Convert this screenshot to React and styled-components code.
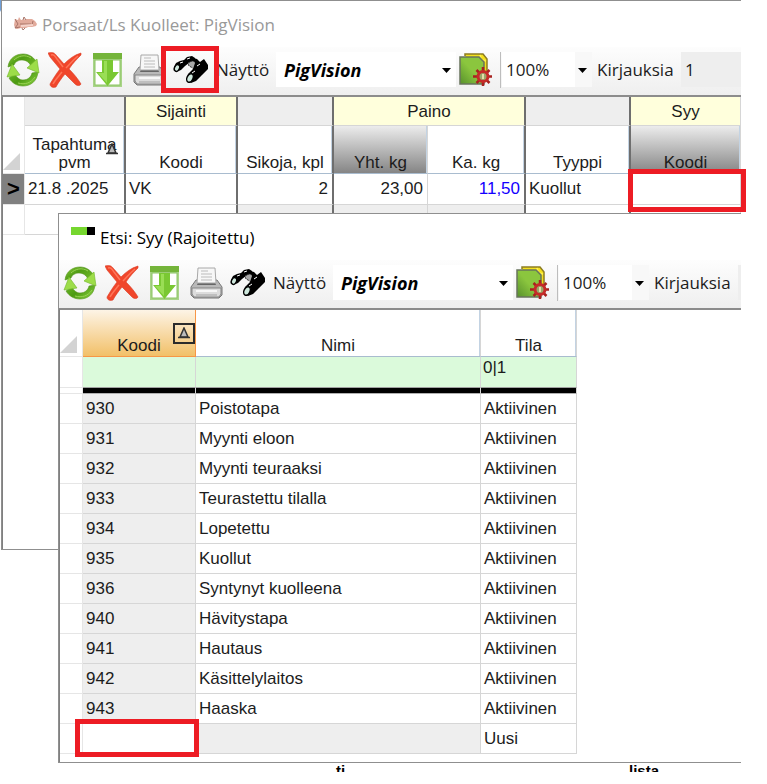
import React from "react";
import styled, { createGlobalStyle, css } from "styled-components";

const uiFont = `"Open Sans", "Noto Sans", sans-serif`;
const gridFont = `"Liberation Sans", Arial, sans-serif`;

const reasons = [
  { code: "930", name: "Poistotapa", state: "Aktiivinen" },
  { code: "931", name: "Myynti eloon", state: "Aktiivinen" },
  { code: "932", name: "Myynti teuraaksi", state: "Aktiivinen" },
  { code: "933", name: "Teurastettu tilalla", state: "Aktiivinen" },
  { code: "934", name: "Lopetettu", state: "Aktiivinen" },
  { code: "935", name: "Kuollut", state: "Aktiivinen" },
  { code: "936", name: "Syntynyt kuolleena", state: "Aktiivinen" },
  { code: "940", name: "Hävitystapa", state: "Aktiivinen" },
  { code: "941", name: "Hautaus", state: "Aktiivinen" },
  { code: "942", name: "Käsittelylaitos", state: "Aktiivinen" },
  { code: "943", name: "Haaska", state: "Aktiivinen" },
];

// icons

const PigIcon = () => (
  <svg width="24" height="16" viewBox="0 0 24 16">
    <path
      d="M1 3l3 1 1-3 2 3 6-1 5 0 3 2 2 3-1 2-4 1-4 0-2 1-5 0-4 1-2-1-1-3z"
      fill="#e2ab9c"
    />
    <path d="M1 3l3 5-3 4 5-1M9 4l1-3 2 3M8 12l1 2 2-2M6 8h11M19 5l-1 4" fill="none" stroke="#a87468" />
    <path d="M7 10l12-1" stroke="#f5d3ca" strokeWidth="2" />
  </svg>
);

const RefreshIcon = () => (
  <svg width="34" height="34" viewBox="0 0 34 34">
    <defs>
      <linearGradient id="refreshTop" x1="0" y1="0" x2="1" y2="0.6">
        <stop offset="0" stopColor="#8fd03c" />
        <stop offset="0.5" stopColor="#4f9c14" />
        <stop offset="1" stopColor="#69b322" />
      </linearGradient>
      <linearGradient id="refreshBottom" x1="0" y1="0" x2="1" y2="0.6">
        <stop offset="0" stopColor="#6cb828" />
        <stop offset="0.5" stopColor="#4c9a12" />
        <stop offset="1" stopColor="#7cc636" />
      </linearGradient>
    </defs>
    <path
      d="M2 14C3 5 10 1 17 1c6 0 10 3 13 7l-5 5C23 9 20 7 16 7c-4 0-7 2-8 5z"
      fill="url(#refreshTop)"
      stroke="#55931f"
      strokeWidth="0.6"
    />
    <path
      d="M32 19C31 29 24 33 17 33 11 33 6 30 3 25l6-4c2 4 5 6 8 6 5 0 8-3 9-7z"
      fill="url(#refreshBottom)"
      stroke="#55931f"
      strokeWidth="0.6"
    />
    <path d="M21 15l10-9 2 14z" fill="#9ddd49" stroke="#70b528" strokeWidth="0.6" />
    <path d="M1 24L6 11l8 11z" fill="#9ddd49" stroke="#70b528" strokeWidth="0.6" />
    <path d="M8 7c4-4 11-6 17-2M29 24c-4 6-10 8-17 6" fill="none" stroke="#9ad255" strokeWidth="1" />
  </svg>
);

const DeleteIcon = () => (
  <svg width="34" height="36" viewBox="0 0 34 36">
    <path
      d="M0 1c3-1 6-1 8 2l8 9C21 7 26 3 33 1l0 2c-4 4-8 8-12 14 5 5 9 10 12 15-1 2-4 2-6 0L17 22c-4 5-7 9-9 13-3 1-6 0-6-3 3-5 6-10 10-15L2 5z"
      fill="#f0462b"
      stroke="#dc3a22"
      strokeWidth="0.6"
    />
    <path d="M3 3c3-1 4 1 6 4l6 8M30 4c-5 4-8 8-12 12M14 20c-4 5-7 8-9 12" fill="none" stroke="#ff7558" strokeWidth="1.500" />
  </svg>
);

const DownloadIcon = () => (
  <svg width="34" height="36" viewBox="0 0 34 36">
    <rect x="3" y="1" width="29" height="34" fill="#a9d489" />
    <rect x="5" y="8" width="25" height="25" fill="#fff" stroke="#8cc463" />
    <rect x="3" y="1" width="29" height="6" fill="#74b43a" />
    <path d="M12 8h11v12h6L17.500 34 6 20h6z" fill="#7ac832" />
    <path d="M14 9h3v22L8 21h6z" fill="#9ade55" />
  </svg>
);

const PrinterIcon = () => (
  <svg width="34" height="34" viewBox="0 0 34 34">
    <path d="M7 14l-5 7v8l3 3h25l3-3v-8l-5-7z" fill="#b9b9b9" stroke="#777" />
    <path d="M3 22h29v6l-2 3H5l-2-3z" fill="#dcdcdc" stroke="#858585" />
    <path d="M8 19l2-5h15l2 5z" fill="#666" />
    <path d="M9 2h17l1 15H8z" fill="#f7f7f7" stroke="#a8a8a8" />
    <path d="M12 5h7M12 8h11M12 11h11M12 14h11" stroke="#bbb" />
    <path d="M7 24h21v2H7z" fill="#f7f7f7" />
    <path d="M7 29h21" stroke="#a2a2a2" />
  </svg>
);

const BinocularsIcon = () => (
  <svg width="36" height="30" viewBox="0 0 36 30">
    <path d="M1 12l2-4 4-2 4-1 3-3 5-1 3 2 1 4-3 2-4-1-4 3-4 4-5 2-2-2z" fill="#000" />
    <path d="M15 8l4-2 4 1 3 3-1 4-3 3-2-4-4-2z" fill="#a9a9a9" stroke="#333" strokeDasharray="2 1" />
    <path d="M20 3l4 1 3 3 4-3 4 6 0 4-6 6-6 6-5 2-4-3 1-6 5-5 2-6z" fill="#000" />
    <ellipse cx="4" cy="13" rx="2.500" ry="3.500" transform="rotate(25 4 13)" fill="#cfe9de" stroke="#000" strokeWidth="1.500" />
    <ellipse cx="17" cy="23" rx="3" ry="4.500" transform="rotate(25 17 23)" fill="#cfe9de" stroke="#000" strokeWidth="1.500" />
    <path d="M7 8l3-1M14 4l3-1M22 16l-3 2M24 11l3-2" stroke="#fff" />
  </svg>
);

const SettingsIcon = () => (
  <svg width="34" height="34" viewBox="0 0 34 34">
    <defs>
      <linearGradient id="pageGreen" x1="0" y1="1" x2="1" y2="0">
        <stop offset="0" stopColor="#57902c" />
        <stop offset="0.5" stopColor="#8bc63e" />
      </linearGradient>
    </defs>
    <path d="M7 3V1h18l4 5v22" fill="#f4e01c" stroke="#8c7c22" strokeWidth="1.500" />
    <path d="M22 2l1 5 5 1" fill="none" stroke="#fff04a" strokeWidth="2" />
    <path d="M2 4h19l5 5v22H2z" fill="url(#pageGreen)" stroke="#68745c" strokeWidth="1.500" />
    <path d="M25 14v19M15 23.500h19M18.500 17l13 13M31.500 17l-13 13" stroke="#a8221f" strokeWidth="2.500" />
    <circle cx="25" cy="23.500" r="5" fill="#9aa86a" stroke="#c62b28" strokeWidth="3" />
    <path d="M25 21v5" stroke="#e6dca8" strokeWidth="2" />
  </svg>
);

const SelectArrow = () => (
  <ArrowSlot>
    <svg width="9" height="5" viewBox="0 0 9 5">
      <path d="M0 0h9L4.500 5z" fill="#000" />
    </svg>
  </ArrowSlot>
);

const SortTriangle = () => (
  <svg width="12" height="12" viewBox="0 0 12 12">
    <path d="M6 1l4 9H2z" fill="#bbb" stroke="#333" strokeWidth="1.500" />
    <path d="M0 10.500h12" stroke="#333" strokeWidth="1.500" />
  </svg>
);

const CornerTriangle = () => (
  <svg width="17" height="17" viewBox="0 0 17 17">
    <path d="M17 0v17H0z" fill="#d3d3d3" />
  </svg>
);

const AppIcon = () => (
  <svg width="24" height="8" viewBox="0 0 24 8">
    <path d="M0 0h16v8H0z" fill="#76d72f" />
    <path d="M16 0h8v8h-8z" fill="#000" />
  </svg>
);

const Toolbar = ({ id, count, highlightSearch }) => (
  <ToolbarRow>
    <IconButton type="button" aria-label="Päivitä">
      <RefreshIcon />
    </IconButton>
    <IconButton type="button" aria-label="Poista">
      <DeleteIcon />
    </IconButton>
    <IconButton type="button" aria-label="Tallenna">
      <DownloadIcon />
    </IconButton>
    <IconButton type="button" aria-label="Tulosta">
      <PrinterIcon />
    </IconButton>
    <IconButton type="button" aria-label="Etsi">
      <BinocularsIcon />
      {highlightSearch && <Highlight $inset="-7px -11px -6px -13px" />}
    </IconButton>
    <ToolLabel htmlFor={`${id}-view`} $width={60}>
      Näyttö
    </ToolLabel>
    <SelectBox $width={180}>
      <ToolSelect id={`${id}-view`} $strong>
        <option>PigVision</option>
      </ToolSelect>
      <SelectArrow />
    </SelectBox>
    <IconButton type="button" aria-label="Asetukset">
      <SettingsIcon />
    </IconButton>
    <Divider />
    <SelectBox $width={90} $shaded>
      <ToolSelect id={`${id}-zoom`} aria-label="Zoom">
        <option>100%</option>
      </ToolSelect>
      <SelectArrow />
    </SelectBox>
    <ToolLabel htmlFor={`${id}-count`} $width={89} $pad={5}>
      Kirjauksia
    </ToolLabel>
    <CountBox id={`${id}-count`}>{count}</CountBox>
  </ToolbarRow>
);

const EventsTable = () => (
  <Table $fluid>
    <colgroup>
      <Col $width={22} />
      <Col $width={101} />
      <Col $width={112} />
      <Col $width={96} />
      <Col $width={94} />
      <Col $width={98} />
      <Col $width={105} />
      <col />
    </colgroup>
    <thead>
      <tr>
        <CornerCell rowSpan={2}>
          <CornerTriangle />
        </CornerCell>
        <GroupCell $dark />
        <GroupCell $dark $named>
          Sijainti
        </GroupCell>
        <GroupCell $dark />
        <GroupCell $dark $named colSpan={2}>
          Paino
        </GroupCell>
        <GroupCell $dark />
        <GroupCell $named>Syy</GroupCell>
      </tr>
      <tr>
        <HeadCell $dark $height={48}>
          Tapahtuma
          <br />
          pvm
          <SortMark>
            <SortTriangle />
          </SortMark>
        </HeadCell>
        <HeadCell $dark>Koodi</HeadCell>
        <HeadCell $dark>Sikoja, kpl</HeadCell>
        <HeadCell $tone="grey">Yht. kg</HeadCell>
        <HeadCell $dark>Ka. kg</HeadCell>
        <HeadCell $dark>Tyyppi</HeadCell>
        <HeadCell $tone="grey">Koodi</HeadCell>
      </tr>
    </thead>
    <tbody>
      <tr>
        <RowMark $current $height={31}>
          &gt;
        </RowMark>
        <Cell $dark>21.8 .2025</Cell>
        <Cell $dark>VK</Cell>
        <Cell $dark $right>
          2
        </Cell>
        <Cell $right>23,00</Cell>
        <Cell $dark $right $blue>
          11,50
        </Cell>
        <Cell $dark>Kuollut</Cell>
        <Cell>
          <CellInput aria-label="Syy, koodi" />
          <Highlight $inset="-5px -6px -8px -3px" />
        </Cell>
      </tr>
      <tr>
        <RowMark $height={30} />
        <Cell $dark />
        <Cell $dark />
        <Cell $dark $muted />
        <Cell $muted />
        <Cell $dark $muted />
        <Cell $dark />
        <Cell />
      </tr>
    </tbody>
  </Table>
);

const ReasonsTable = () => (
  <Table>
    <colgroup>
      <Col $width={23} />
      <Col $width={113} />
      <Col $width={285} />
      <Col $width={96} />
    </colgroup>
    <thead>
      <tr>
        <CornerCell>
          <CornerTriangle />
        </CornerCell>
        <HeadCell $tone="orange" $height={47}>
          Koodi
          <SortMark $boxed>
            <SortTriangle />
          </SortMark>
        </HeadCell>
        <HeadCell>Nimi</HeadCell>
        <HeadCell>Tila</HeadCell>
      </tr>
      <tr>
        <RowMark $height={31} />
        <FilterCell>
          <CellInput aria-label="Suodata koodi" />
        </FilterCell>
        <FilterCell>
          <CellInput aria-label="Suodata nimi" />
        </FilterCell>
        <FilterCell>
          <CellInput aria-label="Suodata tila" defaultValue="0|1" />
        </FilterCell>
      </tr>
      <tr>
        <RowMark $height={6} />
        <BarCell />
        <BarCell />
        <BarCell />
      </tr>
    </thead>
    <tbody>
      {reasons.map(({ code, name, state }) => (
        <tr key={code}>
          <RowMark $height={30} />
          <Cell $muted>{code}</Cell>
          <Cell>{name}</Cell>
          <Cell>{state}</Cell>
        </tr>
      ))}
      <tr>
        <RowMark $height={30} />
        <Cell>
          <CellInput aria-label="Uusi koodi" />
          <Highlight $inset="-5px -4px -4px -8px" />
        </Cell>
        <Cell $muted />
        <Cell>Uusi</Cell>
      </tr>
    </tbody>
  </Table>
);

const App = () => (
  <Page>
    <GlobalStyle />
    <Desktop>
      <Window>
        <TitleBar $inactive>
          <PigIcon />
          <span>Porsaat/Ls Kuolleet: PigVision</span>
        </TitleBar>
        <Toolbar id="events" count={1} highlightSearch />
        <GridArea $minHeight={454}>
          <EventsTable />
        </GridArea>
      </Window>
      <Dialog>
        <TitleBar>
          <RaisedIcon>
            <AppIcon />
          </RaisedIcon>
          <span>Etsi: Syy (Rajoitettu)</span>
        </TitleBar>
        <Toolbar id="search" />
        <GridArea>
          <ReasonsTable />
        </GridArea>
      </Dialog>
    </Desktop>
    <CutLine>
      <span>ti</span>
      <span>lista</span>
    </CutLine>
  </Page>
);

export default App;

const GlobalStyle = createGlobalStyle`
  *, *::before, *::after {
    box-sizing: border-box;
  }
  body {
    margin: 0;
    background: #fff;
    color: #1c1c1c;
    font-family: ${gridFont};
  }
  svg {
    display: block;
    flex: none;
  }
`;

const Page = styled.main`
  padding: 0 26px 12px 1px;
  background: linear-gradient(#6f9fd8 10px, #fff 12px) 0 0 / 1px 100% no-repeat;
`;

const Desktop = styled.div`
  display: grid;
  grid-template-columns: minmax(0, 1fr);
`;

const Window = styled.section`
  grid-area: 1 / 1;
  align-self: start;
  background: #fff;
  border: 1px solid #8f8f8f;
  border-right: 0;
`;

const Dialog = styled(Window)`
  z-index: 2;
  margin: 213px 0 0 57px;
  overflow: hidden;
`;

const TitleBar = styled.header`
  display: flex;
  align-items: center;
  gap: ${({ $inactive }) => ($inactive ? "4px" : "5px")};
  height: 46px;
  padding: 0 12px;
  font-family: ${uiFont};
  font-size: 17px;
  color: ${({ $inactive }) => ($inactive ? "#999" : "#000")};
`;

const RaisedIcon = styled.span`
  padding-bottom: 12px;
`;

const ToolbarRow = styled.div`
  display: flex;
  align-items: center;
  height: 48px;
  padding: 0 0 3px 4px;
  background: linear-gradient(#fdfdfd, #efefef);
  font-family: ${uiFont};
  font-size: 17px;
`;

const IconButton = styled.button`
  position: relative;
  display: flex;
  flex: none;
  align-items: center;
  justify-content: center;
  width: 34px;
  height: 34px;
  margin-right: 8px;
  padding: 0;
  border: 0;
  background: none;
`;

const ToolLabel = styled.label`
  flex: none;
  width: ${({ $width }) => $width}px;
  padding-left: ${({ $pad = 0 }) => $pad}px;
`;

const SelectBox = styled.div`
  position: relative;
  flex: none;
  width: ${({ $width }) => $width}px;
  height: 35px;
  margin-right: ${({ $shaded }) => ($shaded ? 0 : 2)}px;
  background: ${({ $shaded }) =>
    $shaded ? "linear-gradient(to left, #f8f8f8 17px, #fff 17px)" : "#fff"};
`;

const ArrowSlot = styled.span`
  position: absolute;
  top: 16px;
  right: 5px;
  pointer-events: none;
`;

const ToolSelect = styled.select`
  appearance: none;
  width: 100%;
  height: 100%;
  padding: 0 18px 0 4px;
  border: 0;
  background: none;
  color: #1c1c1c;
  font: 17px ${uiFont};
  ${({ $strong }) =>
    $strong &&
    css`
      padding-left: 8px;
      color: #000;
      font-size: 18px;
      font-weight: 700;
      font-style: italic;
    `}
`;

const Divider = styled.span`
  flex: none;
  width: 1px;
  height: 36px;
  margin-right: 1px;
  background: #bdbdbd;
`;

const CountBox = styled.output`
  flex: 1;
  height: 35px;
  padding-left: 4px;
  background: #eee;
  line-height: 35px;
`;

const GridArea = styled.div`
  min-height: ${({ $minHeight = 0 }) => $minHeight}px;
  padding-bottom: 8px;
  border-top: 2px solid #8c8c8c;
  border-left: 1px solid #808080;
`;

const Table = styled.table`
  width: ${({ $fluid }) => ($fluid ? "100%" : "517px")};
  table-layout: fixed;
  border-spacing: 0;
  font-size: 17px;
  line-height: 18px;
`;

const Col = styled.col`
  width: ${({ $width }) => $width}px;
`;

const rightLine = css`
  border-right: ${({ $dark }) => ($dark ? "2px solid #6e6e6e" : "1px solid #d6d6d6")};
`;

const CornerCell = styled.td`
  padding: 0 0 3px;
  border-right: 1px solid #e6e6e6;
  border-bottom: 1px solid #e6e6e6;
  vertical-align: bottom;
`;

const GroupCell = styled.th`
  height: 29px;
  padding: 2px 0 0;
  ${rightLine}
  border-bottom: 1px solid #d6d6d6;
  background: ${({ $named }) => ($named ? "#ffffdc" : "#eee")};
  font-weight: 400;
`;

const tones = {
  grey: "linear-gradient(#ececec, #858585)",
  orange: "linear-gradient(#fdf4e6, #f2c068)",
};

const HeadCell = styled.th`
  position: relative;
  height: ${({ $height }) => ($height ? `${$height}px` : "auto")};
  padding: 0 0 1px;
  ${rightLine}
  border-bottom: 1px solid #a9bccf;
  background: ${({ $tone }) => tones[$tone] || "#fff"};
  box-shadow: inset -1px 0 #c3d3e3;
  font-weight: 400;
  vertical-align: bottom;
  ${({ $tone }) =>
    $tone === "orange" &&
    css`
      border-color: #f79646;
      box-shadow: none;
    `}
`;

const SortMark = styled.span`
  position: absolute;
  right: 6px;
  bottom: 18px;
  ${({ $boxed }) =>
    $boxed &&
    css`
      right: 0;
      bottom: 12px;
      padding: 2px 3px 3px;
      border: 2px solid #2b2b2b;
    `}
`;

const RowMark = styled.td`
  height: ${({ $height }) => $height}px;
  padding: 0;
  border-right: 1px solid #e6e6e6;
  border-bottom: 1px solid #e6e6e6;
  background: ${({ $current }) => ($current ? "#808080" : "#fff")};
  color: #000;
  font-size: 22px;
  font-weight: 700;
  text-align: center;
`;

const Cell = styled.td`
  position: relative;
  padding: 0 4px 0 3px;
  ${rightLine}
  border-bottom: 1px solid #d6d6d6;
  background: ${({ $muted }) => ($muted ? "#eee" : "#fff")};
  color: ${({ $blue }) => ($blue ? "#1400ff" : "inherit")};
  text-align: ${({ $right }) => ($right ? "right" : "left")};
  white-space: nowrap;
`;

const FilterCell = styled.td`
  padding: 1px 2px;
  border-right: 1px solid #d6d6d6;
  border-bottom: 1px solid #a0a0a0;
  background: #dbfadb;
  vertical-align: top;
`;

const BarCell = styled.td`
  padding: 0;
  border-right: 1px solid #d6d6d6;
  border-bottom: 1px solid #b0b0b0;
  background: #000;
  background-clip: padding-box;
`;

const CellInput = styled.input`
  display: block;
  width: 100%;
  height: 20px;
  padding: 0;
  border: 0;
  outline: 0;
  background: transparent;
  color: inherit;
  font: inherit;
`;

const Highlight = styled.span`
  position: absolute;
  z-index: 1;
  inset: ${({ $inset }) => $inset};
  border: 5px solid #ed1c24;
  pointer-events: none;
`;

// only the tops of these letters show under the dialog
const CutLine = styled.footer`
  display: grid;
  grid-template-columns: 293px 1fr;
  height: 9px;
  padding-left: 335px;
  overflow: hidden;
  color: #000;
  font-size: 15px;
  font-weight: 700;
  line-height: 16px;
`;
